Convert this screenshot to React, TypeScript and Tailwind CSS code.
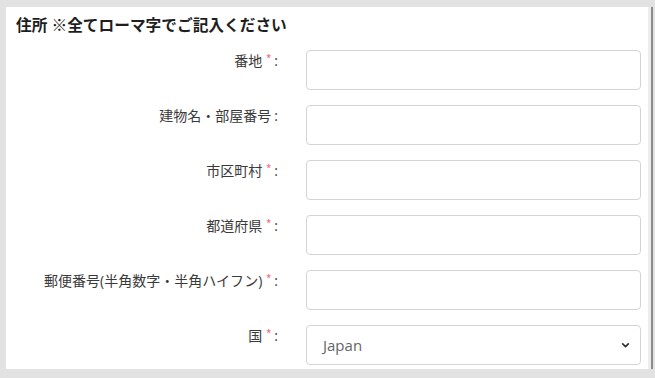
import React from "react";

const fields = [
  { label: "番地", required: true },
  { label: "建物名・部屋番号", required: false },
  { label: "市区町村", required: true },
  { label: "都道府県", required: true },
  { label: "郵便番号(半角数字・半角ハイフン)", required: true },
];

function Label({ text, required }: { text: string; required: boolean }) {
  return (
    <label className="w-[266px] pt-[1px] pr-[4px] text-right text-[14px] leading-[20px] text-[#3a3a3a]">
      {text}
      {required && <span className="ml-[4px] align-top text-[9px] leading-[14px] text-[#ec4a5a]">*</span>}
      <span className="ml-[3px]">:</span>
    </label>
  );
}

export default function App() {
  return (
    <div
      className="flex h-[378px] w-[655px] bg-[#e2e2e2] pt-[7px] pb-[9px] pl-[6px]"
      style={{ fontFamily: '"Open Sans", "Noto Sans CJK JP", sans-serif' }}
    >
      <div className="flex flex-1 flex-col bg-white pl-[10px] pr-[7px] pt-[7px]">
        <h2 className="text-[15.7px] font-bold leading-[22px] text-[#1e1e1e]">
          住所 ※全てローマ字でご記入ください
        </h2>

        <div className="mt-[14px] flex flex-col gap-[15px]">
          {fields.map((f) => (
            <div key={f.label} className="flex items-start gap-[24px]">
              <Label text={f.label} required={f.required} />
              <input
                type="text"
                className="h-[40px] flex-1 rounded-[4px] border border-[#d4d4d4] bg-white px-3 outline-none"
              />
            </div>
          ))}

          <div className="flex items-start gap-[24px]">
            <Label text="国" required />
            <div className="relative flex h-[40px] flex-1 items-center rounded-[4px] border border-[#d4d4d4] bg-white pl-[16px]">
              <span className="text-[15px] text-[#666]">Japan</span>
              <svg
                className="absolute right-[9px] top-[15px]"
                width="11"
                height="9"
                viewBox="0 0 16 16"
                fill="none"
                stroke="#333"
                strokeWidth="3"
                strokeLinecap="round"
                strokeLinejoin="round"
              >
                <path d="M3 5l5 5 5-5" />
              </svg>
            </div>
          </div>
        </div>
      </div>
      <div className="flex w-[7px] shrink-0">
        <div className="w-[3px] bg-[#ececec]" />
        <div className="w-[2px] bg-[#8a8a8a]" />
        <div className="w-[2px] bg-[#e2e2e2]" />
      </div>
    </div>
  );
}
